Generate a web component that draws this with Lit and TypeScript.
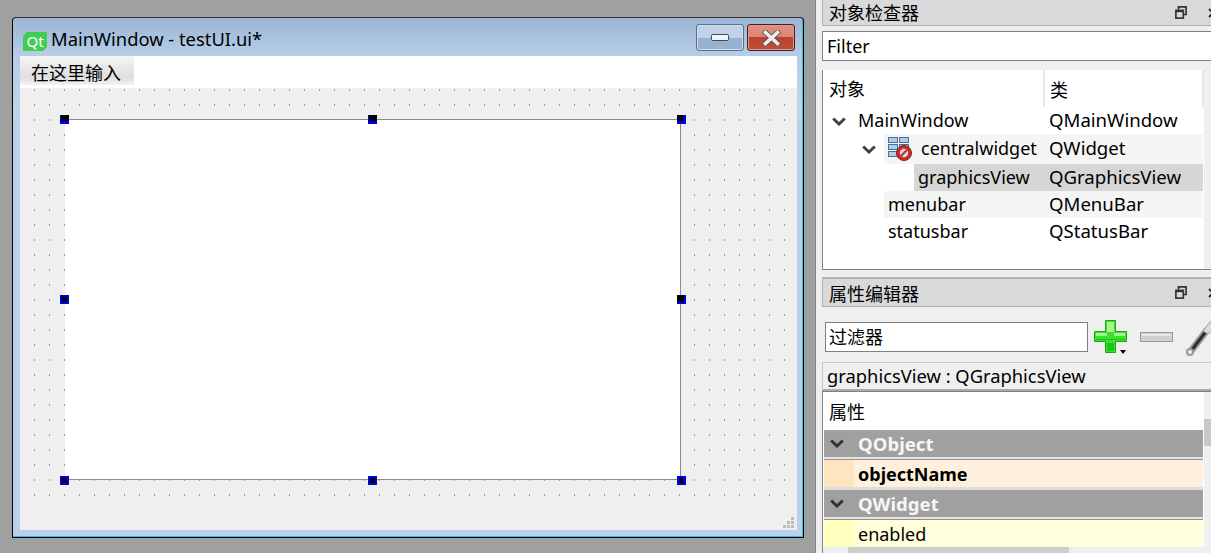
import { LitElement, html, css } from "lit";
import { customElement } from "lit/decorators.js";

const chevron = (color = "#444") => html`<svg class="chev" width="14" height="9" viewBox="0 0 14 9"><path d="M1.2 1.5 7 7 12.8 1.5" fill="none" stroke="${color}" stroke-width="3"/></svg>`;

const restore = html`<svg class="restore" width="12" height="13" viewBox="0 0 12 13"><path d="M3.5 3.5V.9h7.6v7.6H8.5" fill="none" stroke="#333" stroke-width="1.7"/><rect x=".9" y="4.4" width="7.4" height="7.7" fill="none" stroke="#333" stroke-width="1.7"/><path d="M1 5.2h7" stroke="#333" stroke-width="2"/></svg>`;

const closeIcon = html`<svg class="dockclose" width="12" height="12" viewBox="0 0 12 12"><path d="M2 2 10 10M10 2 2 10" stroke="#333" stroke-width="2"/></svg>`;

const widgetIcon = html`<svg width="24" height="24" viewBox="0 0 24 24">
  <g fill="#a9cdee" stroke="#4f6f92" stroke-width="1">
    <rect x=".5" y=".5" width="9" height="5"/><rect x="11.5" y=".5" width="9" height="5"/>
    <rect x=".5" y="7.5" width="9" height="5"/><rect x="11.5" y="7.5" width="9" height="5"/>
    <rect x=".5" y="14.5" width="9" height="5"/>
  </g>
  <circle cx="16" cy="16" r="7.5" fill="#c62f2a" stroke="#8a1f1c"/>
  <circle cx="16" cy="16" r="4.2" fill="#d9d9d9"/>
  <path d="M12.8 19.2 19.2 12.8" stroke="#c62f2a" stroke-width="2"/>
</svg>`;

const plusIcon = html`<svg width="33" height="33" viewBox="0 0 33 33">
  <path d="M11.5.5h10v11h11v10h-11v11h-10v-11H.5v-10h11z" fill="#3fe02c" stroke="#1aa716"/>
  <path d="M13 2h7v10H13zM2 13h11v3H2zM20 13h11v3H20z" fill="#a6f58e"/>
  <path d="M13 23h7v8h-7zM2 19h29v1H2z" fill="#12c818"/>
</svg>`;

const minusIcon = html`<svg width="33" height="10" viewBox="0 0 33 10">
  <rect x=".5" y=".5" width="32" height="9" fill="#cfcfcf" stroke="#9a9a9a"/>
  <rect x="2" y="2" width="29" height="2" fill="#e6e6e6"/>
</svg>`;

const wrenchIcon = html`<svg width="28" height="36" viewBox="0 0 28 36">
  <path d="M6 31 22 10" stroke="#9a9a9a" stroke-width="7"/>
  <path d="M6 31 22 10" stroke="#2e2e2e" stroke-width="3"/>
  <circle cx="5" cy="32" r="3" fill="#eee" stroke="#999" stroke-width="2"/>
  <path d="M18 11 25 2 28 0V10L23 14z" fill="#dcdcdc" stroke="#999"/>
</svg>`;

const treeRows = [
  { bg: 0, shade: "", h: 27, chevAt: 9, chevTop: 10, name: "MainWindow", nameAt: 35, cls: "QMainWindow", icon: false },
  { bg: 61, shade: "alt", h: 30, chevAt: -22, chevTop: 11, name: "centralwidget", nameAt: 9, cls: "QWidget", icon: true },
  { bg: 91, shade: "sel", h: 27, chevAt: null, chevTop: 0, name: "graphicsView", nameAt: 4, cls: "QGraphicsView", icon: false },
  { bg: 61, shade: "alt", h: 27, chevAt: null, chevTop: 0, name: "menubar", nameAt: 4, cls: "QMenuBar", icon: false },
  { bg: 61, shade: "", h: 27, chevAt: null, chevTop: 0, name: "statusbar", nameAt: 4, cls: "QStatusBar", icon: false },
];

@customElement("app-root")
export class AppRoot extends LitElement {
  static styles = css`
    :host {
      display: flex;
      width: 1211px;
      height: 553px;
      overflow: hidden;
      background: #a0a0a0;
      font-family: "Noto Sans", "Noto Sans CJK SC", sans-serif;
      font-size: 18px;
      color: #000;
    }
    * { box-sizing: border-box; }
    svg { display: block; }
    .stage { width: 815px; flex: none; padding: 17px 0 0 12px; }
    .window {
      width: 792px;
      height: 521px;
      border: 1px solid #000;
      border-top-color: #303030;
      border-radius: 4px 4px 0 0;
      background: linear-gradient(#9bb5d3 0, #b6cee8 38px, #c0d5ea 100px, #b9d1ea 101px);
      display: flex;
      flex-direction: column;
      box-shadow: inset 0 -1px 0 #1fc6e0, inset -1px 0 0 #1fc6e0;
    }
    .titlebar { height: 38px; flex: none; display: flex; align-items: flex-start; padding: 6px 8px 0 10px; }
    .qt {
      width: 24px; height: 19px; margin-top: 8px; flex: none;
      background: #41cd52;
      clip-path: polygon(4px 0, 100% 0, 100% calc(100% - 4px), calc(100% - 4px) 100%, 0 100%, 0 4px);
      color: #fff; font-size: 15px; line-height: 19px; text-align: center;
    }
    .title { margin-left: 4px; line-height: 30px; flex: 1; white-space: nowrap; font-size: 18.35px; }
    .wbtn { width: 48px; height: 27px; border-radius: 3px; display: flex; align-items: center; justify-content: center; flex: none; }
    .min {
      border: 1px solid #5f6e85;
      background: linear-gradient(#bed2e8 0 50%, #98b2d0 50% 100%);
      box-shadow: inset 0 0 0 1px #d3e0ee;
      margin-right: 3px;
    }
    .close {
      border: 1px solid #4a1c26;
      background: linear-gradient(#e2907f 0, #dc8373 48%, #b9432c 50%, #c05038 100%);
      box-shadow: inset 0 0 0 1px #dc9a8e;
    }
    .client { margin: 0 7px; width: 777px; height: 474px; flex: none; background: #efefef; display: flex; flex-direction: column; }
    .menubar { height: 32px; flex: none; background: #fff; }
    .menuitem {
      width: 114px; height: 29px; padding-left: 11px; line-height: 34px;
      background: linear-gradient(#f5f5f5, #dedede 72%, #f2f2f2);
    }
    .form {
      flex: none;
      height: 412px;
      padding: 31px 0 0 45px;
      background-color: #efefef;
      background-image: conic-gradient(at 1px 2px, transparent 75%, #9a9a9a 0);
      background-size: 15px 15px;
      background-position: 14px 1px;
    }
    .gview {
      position: relative;
      width: 616px; height: 361px;
      background: #fff;
      border: 1px solid #8b8b98;
      border-left: none;
    }
    .h { position: absolute; width: 9px; height: 9px; background: #000; border: 1px solid #0000e0; }
    .h.tl { left: -5px; top: -5px; border-width: 0 0 3px 1px; }
    .h.tm { left: 303px; top: -5px; border-width: 0 0 3px 1px; }
    .h.tr { left: 612px; top: -5px; border-width: 0 3px 3px 0; }
    .h.ml { left: -5px; top: 175px; border-width: 2px; }
    .h.mr { left: 612px; top: 175px; border-width: 0 2px 2px 0; }
    .h.bl { left: -5px; top: 356px; border-width: 2px; }
    .h.bm { left: 303px; top: 356px; border-width: 2px; }
    .h.br { left: 612px; top: 356px; border-width: 2px 3px 2px 2px; }
    .status { flex: 1; display: flex; justify-content: flex-end; align-items: flex-end; padding: 0 3px 2px 0; }
    .grip { display: grid; grid-template-columns: repeat(3, 3px); gap: 1px; }
    .grip i { display: block; width: 3px; height: 3px; background: #bdbdbd; }
    .grip i.o { background: transparent; }

    .side {
      flex: none; width: 396px; height: 553px; overflow: hidden;
      background: #efefef; border-left: 1px solid #808088; padding-left: 6px;
    }
    .col { width: 400px; display: flex; flex-direction: column; }
    .dock {
      height: 26px; flex: none; display: flex; align-items: center; padding-left: 6px;
      background: #d9d9d9; border: 1px solid #b0b0b0; border-width: 0 0 1px 1px;
      line-height: 26px;
    }
    .dock span { flex: 1; }
    .restore { margin-right: 20px; }
    .dockclose { margin-right: 3px; }
    .input { background: #fff; border: 1px solid #808080; line-height: 28px; padding-left: 4px; white-space: nowrap; }
    .f1 { height: 30px; margin-top: 5px; }
    .tree {
      margin-top: 9px; height: 200px; flex: none; background: #fff;
      border-left: 1px solid #808080; border-bottom: 1px solid #808080;
      position: relative;
    }
    .tree::after {
      content: ""; position: absolute; left: 381px; top: 0; bottom: 0; width: 18px; background: #f0f0f0;
    }
    .tw { width: 381px; flex: none; display: flex; flex-direction: column; }
    .thead { height: 37px; flex: none; display: flex; }
    .thead div { padding-left: 6px; line-height: 38px; border-right: 2px solid #e6e6e6; }
    .thead .a { width: 222px; }
    .thead .b { width: 159px; padding-left: 5px; line-height: 40px; }
    .row { display: flex; flex: none; }
    .cells { flex: 1; width: 0; display: flex; align-items: center; margin-right: 1px; }
    .alt { background: #f5f5f5; }
    .sel { background: #d6d6d6; }
    .name { flex: 1; white-space: nowrap; line-height: 27px; }
    .cls { width: 154px; flex: none; white-space: nowrap; line-height: 27px; font-size: 18.6px; margin-top: -2px; }
    .up { margin-top: -2px; }
    .cls.up { margin-top: -4px; }
    .anchor { flex: none; width: 0; position: relative; }
    .ico { flex: none; margin-left: 4px; }

    .dock2 { height: 30px; margin-top: 7px; border-top: 2px solid #b4b4b4; }
    .dock2 span { padding-top: 2px; }
    .tools { height: 55px; flex: none; display: flex; padding: 15px 0 0 3px; align-items: flex-start; }
    .f2 { width: 263px; height: 30px; flex: none; padding-left: 3px; }
    .plus { margin: -2px 0 0 6px; position: relative; flex: none; width: 33px; height: 33px; }
    .plus::after {
      content: ""; position: absolute; left: 26px; top: 30px;
      border: 3.5px solid transparent; border-top: 4px solid #000; border-bottom: 0;
    }
    .minus { margin: 10px 0 0 13px; flex: none; }
    .wrench { margin: -2px 0 0 12px; flex: none; }
    .label {
      height: 29px; flex: none; padding-left: 4px; line-height: 25px; font-size: 18.35px;
      border: 1px solid #c8c8c8; border-width: 1px 0 2px 1px; border-bottom-color: #ababab;
      white-space: nowrap;
    }
    .ptree {
      flex: none; height: 162px; border-top: 1px solid #808080; border-left: 1px solid #808080;
      display: flex; align-items: stretch; background: #efefef;
    }
    .pmain { width: 381px; flex: none; background: #fff; display: flex; flex-direction: column; padding-top: 1px; }
    .phead { height: 37px; flex: none; padding-left: 6px; line-height: 38px; }
    .prow { width: 379px; margin-left: 1px; height: 27px; flex: none; display: flex; line-height: 29px; }
    .group { background: #a0a0a0; color: #f6f6f6; font-weight: 700; position: relative; font-size: 18.6px; line-height: 27px; }
    .group .chev { position: absolute; top: 9px; left: 6px; }
    .key { width: 30px; flex: none; }
    .pname { padding-left: 4px; }
    .group .pname { padding-left: 34px; }
    .sep { width: 379px; margin-left: 1px; height: 3px; flex: none; background: linear-gradient(#e4e4e4 0 2px, #909090 2px 3px); }
    .sep.l { background: #dedede; }
    .orange { background: #fff0dd; font-weight: 700; }
    .orange .key { background: #ffe4c0; }
    .yellow { background: #ffffdc; }
    .yellow .key { background: #ffffbe; }
    .hscroll { flex: 1; background: #efefef; padding-left: 25px; }
    .hscroll i { display: block; width: 221px; height: 100%; background: #cdcdcd; }
    .vscroll { flex: none; width: 8px; padding-top: 27px; }
    .vscroll i { display: block; width: 7px; height: 27px; background: #c8c8c8; }
  `;

  private renderRow(r: (typeof treeRows)[number]) {
    return html`<div class="row" style="height:${r.h}px">
      <div style="width:${r.bg}px;flex:none"></div>
      ${r.chevAt !== null
        ? html`<div class="anchor"><div style="position:absolute;left:${r.chevAt}px;top:${r.chevTop}px">${chevron()}</div></div>`
        : ""}
      <div class="cells ${r.shade}">
        ${r.icon ? html`<div class="ico">${widgetIcon}</div>` : ""}
        <div class="name ${r.icon ? "up" : ""}" style="padding-left:${r.nameAt}px">${r.name}</div>
        <div class="cls ${r.icon ? "up" : ""}">${r.cls}</div>
      </div>
    </div>`;
  }

  render() {
    const grip = [0, 0, 1, 0, 1, 1, 1, 1, 1];
    const handles = ["tl", "tm", "tr", "ml", "mr", "bl", "bm", "br"];
    return html`
      <div class="stage">
        <div class="window">
          <div class="titlebar">
            <div class="qt">Qt</div>
            <div class="title">MainWindow - testUI.ui*</div>
            <div class="wbtn min">
              <svg width="18" height="7" viewBox="0 0 18 7"><rect x=".5" y=".5" width="17" height="6" rx="1" fill="#f4f4f4" stroke="#3d4c63"/></svg>
            </div>
            <div class="wbtn close">
              <svg width="19" height="16" viewBox="0 0 19 16"><path d="M3.5 2.5 15.5 13.5M15.5 2.5 3.5 13.5" stroke="#555" stroke-width="5.2" stroke-linecap="square"/><path d="M3.5 2.5 15.5 13.5M15.5 2.5 3.5 13.5" stroke="#eeeeee" stroke-width="3.6" stroke-linecap="square"/></svg>
            </div>
          </div>
          <div class="client">
            <div class="menubar"><div class="menuitem">在这里输入</div></div>
            <div class="form">
              <div class="gview">
                ${handles.map((h) => html`<div class="h ${h}"></div>`)}
              </div>
            </div>
            <div class="status">
              <div class="grip">${grip.map((g) => html`<i class="${g ? "" : "o"}"></i>`)}</div>
            </div>
          </div>
        </div>
      </div>
      <div class="side">
        <div class="col">
          <div class="dock"><span>对象检查器</span>${restore}${closeIcon}</div>
          <div class="input f1">Filter</div>
          <div class="tree">
            <div class="tw">
              <div class="thead"><div class="a">对象</div><div class="b">类</div></div>
              ${treeRows.map((r) => this.renderRow(r))}
            </div>
          </div>
          <div class="dock dock2"><span>属性编辑器</span>${restore}${closeIcon}</div>
          <div class="tools">
            <div class="input f2">过滤器</div>
            <div class="plus">${plusIcon}</div>
            <div class="minus">${minusIcon}</div>
            <div class="wrench">${wrenchIcon}</div>
          </div>
          <div class="label">graphicsView : QGraphicsView</div>
          <div class="ptree">
            <div class="pmain">
              <div class="phead">属性</div>
              <div class="prow group">${chevron("#333")}<div class="pname">QObject</div></div>
              <div class="sep"></div>
              <div class="prow orange"><div class="key"></div><div class="pname">objectName</div></div>
              <div class="sep l"></div>
              <div class="prow group">${chevron("#333")}<div class="pname">QWidget</div></div>
              <div class="sep"></div>
              <div class="prow yellow"><div class="key"></div><div class="pname">enabled</div></div>
              <div class="hscroll"><i></i></div>
            </div>
            <div class="vscroll"><i></i></div>
          </div>
        </div>
      </div>
    `;
  }
}
